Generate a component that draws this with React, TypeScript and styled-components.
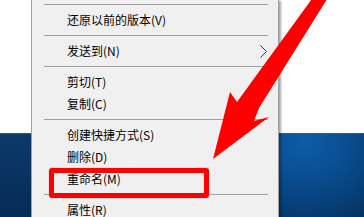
import React from "react";
import styled, { createGlobalStyle } from "styled-components";

const GlobalStyle = createGlobalStyle`
  html, body { margin: 0; padding: 0; background: #ffffff; }
  body { font-family: "Noto Sans CJK SC", "Noto Sans", sans-serif; }
`;

const Stage = styled.div`
  position: relative;
  width: 364px;
  height: 217px;
  overflow: hidden;
  display: flex;
  flex-direction: column;
`;

const WhiteArea = styled.div`
  height: 133px;
  background: #ffffff;
`;

const Desktop = styled.div`
  flex: 1;
  border-top: 1px solid #1762aa;
  background:
    radial-gradient(ellipse 110px 95px at 305px 8px, #0d5ca6 0%, #0a4f93 35%, #063f78 70%, #04305e 100%),
    #0a3562;
  background-repeat: no-repeat;
`;

const LeftDesk = styled.div`
  position: absolute;
  left: 0;
  top: 134px;
  width: 31px;
  height: 83px;
  background: linear-gradient(#0b3a6b, #062b55);
`;

const Menu = styled.div`
  position: absolute;
  left: 31px;
  top: -1px;
  width: 248px;
  box-sizing: border-box;
  background: #f0f0f0;
  border: 1px solid #a0a0a0;
  box-shadow: 2px 2px 2px rgba(0, 0, 0, 0.35);
  display: flex;
  flex-direction: column;
`;

const Separator = styled.div`
  height: 9px;
  box-sizing: border-box;
  padding: 4px 10px 4px 12px;
  &::after {
    content: "";
    display: block;
    height: 1px;
    background: #a0a0a0;
  }
`;

const Item = styled.div`
  height: 22px;
  display: flex;
  align-items: center;
  padding-left: 35px;
  padding-right: 11px;
  font-size: 12px;
  color: #000000;
  white-space: nowrap;
  line-height: 22px;
`;

const Chevron = styled.svg`
  margin-left: auto;
  width: 7px;
  height: 13px;
  display: block;
`;

const Highlight = styled.div`
  position: absolute;
  left: 49px;
  top: 168px;
  width: 160px;
  height: 30px;
  box-sizing: border-box;
  border: 5px solid #ff0000;
  border-radius: 3px;
  box-shadow: 0 0 1px #ff4040;
`;

const Overlay = styled.svg`
  position: absolute;
  left: 0;
  top: 0;
  width: 364px;
  height: 217px;
  pointer-events: none;
`;

type Entry = { kind: "sep" } | { kind: "item"; label: string; sub?: boolean };

const entries: Entry[] = [
  { kind: "sep" },
  { kind: "item", label: "还原以前的版本(V)" },
  { kind: "sep" },
  { kind: "item", label: "发送到(N)", sub: true },
  { kind: "sep" },
  { kind: "item", label: "剪切(T)" },
  { kind: "item", label: "复制(C)" },
  { kind: "sep" },
  { kind: "item", label: "创建快捷方式(S)" },
  { kind: "item", label: "删除(D)" },
  { kind: "item", label: "重命名(M)" },
  { kind: "sep" },
  { kind: "item", label: "属性(R)" },
];

export default function App() {
  return (
    <>
      <GlobalStyle />
      <Stage>
        <WhiteArea />
        <Desktop />
        <LeftDesk />
        <Menu>
          {entries.map((e, i) =>
            e.kind === "sep" ? (
              <Separator key={i} />
            ) : (
              <Item key={i}>
                {e.label}
                {e.sub && (
                  <Chevron viewBox="0 0 7 13">
                    <polyline points="0.5,0.5 6.5,6.5 0.5,12.5" fill="none" stroke="#3a3a3a" strokeWidth="1" />
                  </Chevron>
                )}
              </Item>
            )
          )}
        </Menu>
        <Highlight />
        <Overlay viewBox="0 0 364 217">
          <polygon
            points="314,-4 329,-4 259,108 254,121 269,117 213,159 230,92 237,102"
            fill="#ff0000"
          />
        </Overlay>
      </Stage>
    </>
  );
}
